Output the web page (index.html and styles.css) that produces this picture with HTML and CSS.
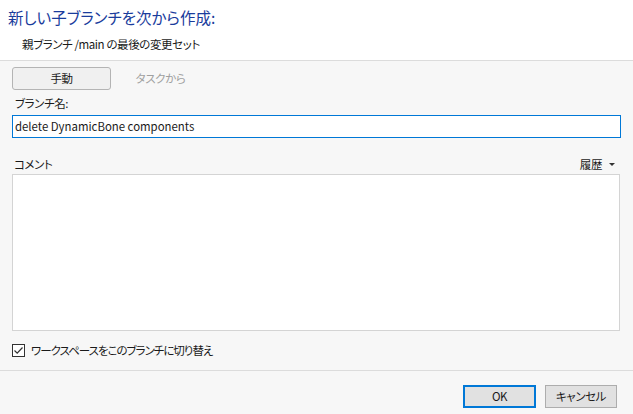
FILE: index.html
```html
<!DOCTYPE html>
<html lang="ja">
<head>
<meta charset="utf-8">
<link rel="stylesheet" href="styles.css">
</head>
<body>
<div class="dialog">
  <header class="head">
    <div class="title">新しい子ブランチを次から作成:</div>
    <div class="subtitle">親ブランチ /main の最後の変更セット</div>
  </header>
  <main class="body">
    <div class="tabs">
      <div class="tab active">手動</div>
      <div class="tab">タスクから</div>
    </div>
    <div class="label">ブランチ名:</div>
    <div class="input">delete DynamicBone components</div>
    <div class="comment-row">
      <span>コメント</span>
      <span class="history">履歴 <span class="caret"></span></span>
    </div>
    <div class="textarea"></div>
    <label class="check">
      <span class="box"><svg width="11" height="11" viewBox="0 0 11 11"><path d="M1.5 5.5 L4.2 8.2 L9.5 2.5" fill="none" stroke="#333" stroke-width="1.2"/></svg></span>
      <span class="check-text">ワークスペースをこのブランチに切り替え</span>
    </label>
  </main>
  <footer class="foot">
    <div class="btn primary">OK</div>
    <div class="btn">キャンセル</div>
  </footer>
</div>
</body>
</html>
```

FILE: styles.css
```css
* { box-sizing: border-box; }
html, body { margin: 0; padding: 0; }
body {
  width: 633px;
  height: 414px;
  background: #f7f7f7;
  font-family: "Noto Sans CJK JP", "Noto Sans", sans-serif;
  font-size: 11.5px;
  letter-spacing: -0.4px;
  font-feature-settings: "palt";
  color: #1a1a1a;
  overflow: hidden;
}
.head {
  background: #ffffff;
  height: 61px;
  border-bottom: 1px solid #dcdcdc;
  padding: 6px 0 0 8px;
}
.title {
  font-size: 15.5px;
  letter-spacing: 0;
  line-height: 22px;
  color: #1a3c9c;
}
.subtitle {
  margin: 8px 0 0 14px;
  line-height: 16px;
  color: #1a1a1a;
}
.body {
  padding: 6px 12px 0 12px;
}
.tabs {
  display: flex;
  height: 23px;
}
.tab {
  width: 99px;
  height: 23px;
  line-height: 21px;
  text-align: center;
  color: #a0a0a0;
  border: 1px solid transparent;
}
.tab.active {
  background: #f0f0f0;
  border-color: #b4b4b4;
  border-radius: 3px;
  color: #1a1a1a;
}
.label {
  margin-top: 4px;
  line-height: 18px;
  padding-left: 3px;
}
.input {
  margin-top: 3px;
  height: 23px;
  border: 1px solid #0078d7;
  background: #fff;
  padding: 0 2px;
  line-height: 20px;
  width: 609px;
  font-size: 11.4px;
  letter-spacing: 0;
}
.comment-row {
  margin-top: 17px;
  padding-left: 2px;
  display: flex;
  justify-content: space-between;
  line-height: 18px;
  width: 603px;
}
.history { display: flex; align-items: center; gap: 7px; }
.caret {
  width: 0; height: 0;
  border-left: 3px solid transparent;
  border-right: 3px solid transparent;
  border-top: 3px solid #333;
}
.textarea {
  margin-top: 1px;
  height: 157px;
  width: 608px;
  background: #fff;
  border: 1px solid #d4d4d4;
}
.check {
  margin-top: 11px;
  display: flex;
  align-items: center;
  gap: 6px;
  line-height: 16px;
}
.check-text { letter-spacing: -1px; }
.box {
  width: 13px; height: 13px;
  border: 1px solid #333;
  background: #fff;
  display: flex;
  align-items: center;
  justify-content: center;
}
.foot {
  margin-top: 12px;
  border-top: 1px solid #dcdcdc;
  display: flex;
  justify-content: flex-end;
  gap: 9px;
  padding: 14px 16px 0 0;
}
.btn {
  width: 72px;
  height: 23px;
  background: #e1e1e1;
  border: 1px solid #adadad;
  text-align: center;
  line-height: 20px;
}
.btn.primary {
  border: 2px solid #0078d7;
  line-height: 18px;
  width: 73px;
}
```
